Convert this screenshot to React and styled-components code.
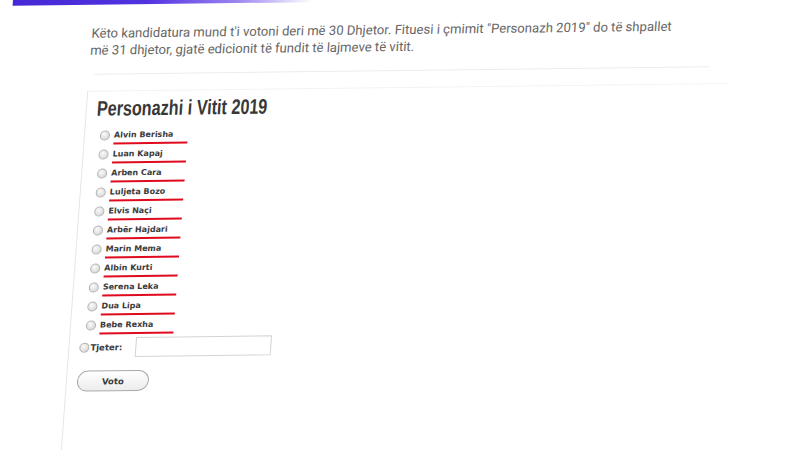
import React from 'react';
import styled, { createGlobalStyle } from 'styled-components';

const candidates = [
  'Alvin Berisha',
  'Luan Kapaj',
  'Arben Cara',
  'Luljeta Bozo',
  'Elvis Naçi',
  'Arbër Hajdari',
  'Marin Mema',
  'Albin Kurti',
  'Serena Leka',
  'Dua Lipa',
  'Bebe Rexha'
];

const GlobalStyle = createGlobalStyle`
  html, body {
    margin: 0;
    padding: 0;
    background: #fff;
  }
  body {
    font-family: Roboto, "Liberation Sans", sans-serif;
  }
`;

class App extends React.Component {
  render() {
    return (
      <Page>
        <GlobalStyle />
        <Canvas>
          <TopBar />
          <Intro>
            Këto kandidatura mund t'i votoni deri më 30 Dhjetor. Fituesi i çmimit "Personazh 2019" do të shpallet
            <br />
            më 31 dhjetor, gjatë edicionit të fundit të lajmeve të vitit.
          </Intro>
          <Rule />
          <Panel>
            <Title><span>Personazhi i Vitit 2019</span></Title>
            <List>
              {candidates.map(name => (
                <Row key={name}>
                  <Radio />
                  <Name>{name}</Name>
                </Row>
              ))}
            </List>
            <OtherRow>
              <Radio />
              <OtherLabel>Tjeter:</OtherLabel>
              <TextBox />
            </OtherRow>
            <VoteButton>Voto</VoteButton>
          </Panel>
        </Canvas>
      </Page>
    );
  }
}

const Page = styled.div`
  width: 800px;
  height: 450px;
  overflow: hidden;
  background: #fff;
`;

const Canvas = styled.div`
  width: 800px;
  height: 520px;
  transform: skew(-4.2deg, -0.7deg);
  transform-origin: 0 0;
`;

const TopBar = styled.div`
  margin-left: 13px;
  width: 300px;
  height: 6px;
  background: linear-gradient(90deg, #4628d4 0%, #5233e0 45%, #9d86f0 75%, rgba(255, 255, 255, 0) 100%);
`;

const Intro = styled.p`
  margin: 20px 0 0 94px;
  width: 640px;
  font-size: 13.1px;
  line-height: 17px;
  color: #666;
  white-space: nowrap;
`;

const Rule = styled.div`
  margin: 15px 0 0 100px;
  width: 615px;
  border-top: 1px solid #ececec;
`;

const Panel = styled.div`
  margin: 16px 0 0 94px;
  width: 640px;
  height: 420px;
  border-left: 1px solid #e6e6e6;
  border-top: 1px solid #f3f3f3;
  padding: 5px 0 0 10px;
  box-sizing: border-box;
`;

const Title = styled.h2`
  margin: 0 0 5px 0;
  height: 24px;
  font-family: "Liberation Sans", Arial, sans-serif;
  font-weight: 700;
  font-size: 21px;
  line-height: 24px;
  color: #383838;

  span {
    display: inline-block;
    transform: scaleX(0.77);
    transform-origin: left center;
    white-space: nowrap;
  }
`;

const List = styled.div`
  display: flex;
  flex-direction: column;
  padding-left: 5px;
`;

const Row = styled.div`
  display: flex;
  align-items: center;
  gap: 4px;
  height: 19px;
`;

const Radio = styled.span`
  display: inline-block;
  flex: none;
  width: 10px;
  height: 10px;
  border-radius: 50%;
  border: 1px solid #b0b0b0;
  background: radial-gradient(circle at 40% 35%, #fafafa 0%, #e0e0e0 60%, #cacaca 100%);
  box-sizing: border-box;
`;

const Name = styled.span`
  display: inline-block;
  width: 74px;
  font-family: "DejaVu Sans", Verdana, sans-serif;
  font-weight: 700;
  font-size: 8px;
  line-height: 10px;
  color: #3b3b3b;
  padding-bottom: 2px;
  border-bottom: 2.5px solid #e00b1e;
  margin-top: 4px;
  white-space: nowrap;
`;

const OtherRow = styled.div`
  display: flex;
  align-items: center;
  margin-top: 2px;
  height: 22px;
`;

const OtherLabel = styled.span`
  font-family: "DejaVu Sans", Verdana, sans-serif;
  font-weight: 700;
  font-size: 8.5px;
  color: #3b3b3b;
  margin: 0 13px 0 1px;
`;

const TextBox = styled.div`
  width: 136px;
  height: 20px;
  border: 1px solid #d4d4d4;
  box-sizing: border-box;
  background: #fff;
`;

const VoteButton = styled.button`
  display: block;
  margin-top: 12px;
  width: 72px;
  height: 21px;
  border: 1px solid #a8a8a8;
  border-radius: 11px;
  background: linear-gradient(#ffffff, #ececec);
  font-family: "DejaVu Sans", Verdana, sans-serif;
  font-weight: 700;
  font-size: 8.5px;
  color: #3b3b3b;
  padding: 0;
`;

export default App;
